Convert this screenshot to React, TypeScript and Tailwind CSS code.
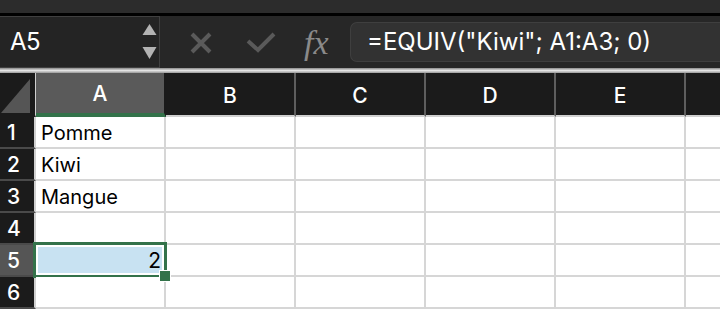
import React from "react";

const cols = ["A", "B", "C", "D", "E", ""];
const rows: { n: number; a: string; num?: boolean }[] = [
  { n: 1, a: "Pomme" },
  { n: 2, a: "Kiwi" },
  { n: 3, a: "Mangue" },
  { n: 4, a: "" },
  { n: 5, a: "2", num: true },
  { n: 6, a: "" },
];

const font = { fontFamily: "Inter, 'Noto Sans', sans-serif" };

function FormulaBar() {
  return (
    <div className="flex h-[52px] bg-[#272727]">
      <div className="flex w-[160px] shrink-0 items-center justify-between border-y border-r border-[#404040] bg-[#242424] pl-[10px] pr-[2px]">
        <span className="text-[24px] tracking-[-0.5px] text-white">A5</span>
        <svg width="15" height="38" viewBox="0 0 15 38">
          <polygon points="7.5,1 14.5,12 0.5,12" fill="#b3b3b3" />
          <polygon points="0.5,24 14.5,24 7.5,36" fill="#b3b3b3" />
        </svg>
      </div>
      <div className="flex w-[190px] shrink-0 items-center">
        <svg width="22" height="22" viewBox="0 0 22 22" className="ml-[30px] mt-[2px]">
          <path d="M2 2 L20 20 M20 2 L2 20" stroke="#5a5a5a" strokeWidth="4" />
        </svg>
        <svg width="30" height="22" viewBox="0 0 30 22" className="ml-[34px] mt-[2px]">
          <path d="M2 9 L12 18 L28 2" stroke="#5a5a5a" strokeWidth="4" fill="none" />
        </svg>
        <span
          className="ml-[28px] mt-[2px] text-[34px] italic leading-none text-[#8a8a8a]"
          style={{ fontFamily: "'Liberation Serif', 'DejaVu Serif', serif" }}
        >
          fx
        </span>
      </div>
      <div className="flex flex-1 items-center">
        <div className="flex h-[40px] flex-1 items-center rounded-l-[7px] border-y border-l border-[#3f3f3f] bg-[#323232] pl-[16px]">
          <span className="text-[24px] text-white">=EQUIV("Kiwi"; A1:A3; 0)</span>
        </div>
      </div>
    </div>
  );
}

function HeaderRow() {
  return (
    <div className="flex h-[44px] bg-[#1b1b1b]">
      <div className="relative w-[36px] shrink-0 border-r border-[#cfcfcf] border-b-2 border-b-[#1b1b1b]">
        <svg width="34" height="42" viewBox="0 0 34 42" className="absolute left-0 top-0">
          <polygon points="30,6 30,40 1,40" fill="#555555" />
        </svg>
      </div>
      {cols.map((c, i) => (
        <div
          key={i}
          className={
            i === 0
              ? "flex w-[130px] shrink-0 items-center justify-center border-r-2 border-[#1b1b1b] border-b-4 border-b-[#33724a] bg-[#5a5a5a] pt-[2px] text-[21px] font-medium text-white"
              : i === cols.length - 1
              ? "flex w-[130px] shrink-0 items-center justify-center border-b-2 border-[#d0d0d0] text-[21px] font-medium text-white"
              : "flex w-[130px] shrink-0 items-center justify-center border-r-2 border-r-[#5e5e5e] border-b-2 border-[#d0d0d0] pt-[4px] text-[21px] font-medium text-white"
          }
        >
          {c}
        </div>
      ))}
    </div>
  );
}

function BodyRow({ n, a, num }: { n: number; a: string; num?: boolean }) {
  return (
    <div className="flex h-[32px]">
      <div
        className={
          n === 5
            ? "flex w-[36px] shrink-0 items-center border-b-2 border-b-[#4a4a4a] border-r-2 border-r-[#d0d0d0] bg-[#555555] pl-[7px] pt-[2px] text-[21px] font-medium text-white"
            : "flex w-[36px] shrink-0 items-center border-b-2 border-b-[#4a4a4a] border-r-2 border-r-[#d0d0d0] bg-[#1b1b1b] pl-[7px] pt-[2px] text-[21px] font-medium text-white"
        }
      >
        {n}
      </div>
      {cols.map((c, i) =>
        i === 0 ? (
          <div
            key={i}
            className="relative flex w-[130px] shrink-0 items-center border-b-2 border-r-2 border-[#d6d6d6] bg-white"
          >
            {num ? (
              <>
                <div className="absolute left-[-3px] top-[-3px] h-[36px] w-[134px] border-[3px] border-[#33724a]" />
                <div className="absolute left-[2px] top-[2px] flex h-[26px] w-[124px] items-center justify-end bg-[#c8e2f2] pr-[1px] pt-[2px] text-[21px] text-black">
                  {a}
                </div>
                <div className="absolute left-[124px] top-[26px] z-10 h-[10px] w-[10px] bg-[#33724a] outline outline-1 outline-white" />
              </>
            ) : (
              <span className="pl-[5px] pt-[2px] text-[20px] text-black">{a}</span>
            )}
          </div>
        ) : (
          <div key={i} className="w-[130px] shrink-0 border-b-2 border-r-2 border-[#d6d6d6] bg-white" />
        )
      )}
    </div>
  );
}

export default function App() {
  return (
    <div className="h-[310px] w-[720px] overflow-hidden bg-white" style={font}>
      <div className="h-[13px] bg-[#2c2c2c]" />
      <div className="h-[3px] bg-black" />
      <FormulaBar />
      <div className="h-[5px] bg-gradient-to-b from-[#8a8a8a] via-[#e4e4e4] to-[#9a9a9a]" />
      <HeaderRow />
      {rows.map((r) => (
        <BodyRow key={r.n} {...r} />
      ))}
    </div>
  );
}
